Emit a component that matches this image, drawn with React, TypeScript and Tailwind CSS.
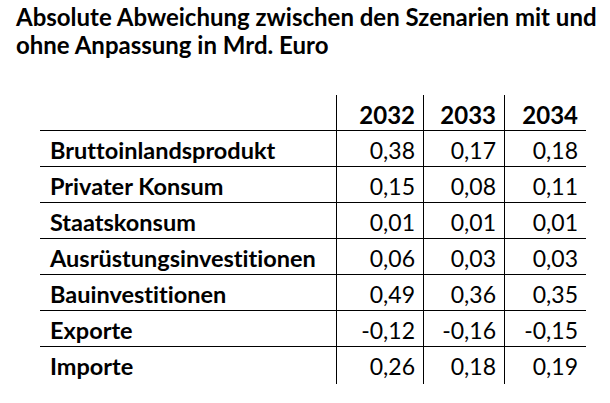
import React from "react";

const rows: [string, string, string, string][] = [
  ["Bruttoinlandsprodukt", "0,38", "0,17", "0,18"],
  ["Privater Konsum", "0,15", "0,08", "0,11"],
  ["Staatskonsum", "0,01", "0,01", "0,01"],
  ["Ausrüstungsinvestitionen", "0,06", "0,03", "0,03"],
  ["Bauinvestitionen", "0,49", "0,36", "0,35"],
  ["Exporte", "-0,12", "-0,16", "-0,15"],
  ["Importe", "0,26", "0,18", "0,19"],
];

export default function App() {
  return (
    <div
      className="w-[610px] h-[403px] bg-white text-black overflow-hidden [font-variant-ligatures:none]"
      style={{ fontFamily: "Lato, 'Open Sans', sans-serif" }}
    >
      <div className="pl-[16px] pt-[3px] text-[24px] font-bold leading-[28px]">
        <div>Absolute Abweichung zwischen den Szenarien mit und</div>
        <div>ohne Anpassung in Mrd. Euro</div>
      </div>
      <div className="ml-[40px] mt-[36px] w-[546px]">
        <div className="grid grid-cols-[297px_87px_81px_81px] h-[36px] border-b border-black font-bold text-[24px]">
          <div className="border-r border-black" />
          <div className="border-r border-black flex items-center justify-end pr-[8px] pt-[2px]">2032</div>
          <div className="border-r border-black flex items-center justify-end pr-[8px] pt-[2px]">2033</div>
          <div className="flex items-center justify-end pr-[8px] pt-[2px]">2034</div>
        </div>
        {rows.map((r, i) => (
          <div
            key={r[0]}
            className={
              i < rows.length - 1
                ? "grid grid-cols-[297px_87px_81px_81px] h-[36px] border-b border-black text-[23px]"
                : "grid grid-cols-[297px_87px_81px_81px] h-[36px] text-[23px]"
            }
          >
            <div className="border-r border-black flex items-center pl-[10px] pt-[2px] font-bold text-[23.5px]">{r[0]}</div>
            <div className="border-r border-black flex items-center justify-end pr-[8px] pt-[2px]">{r[1]}</div>
            <div className="border-r border-black flex items-center justify-end pr-[8px] pt-[2px]">{r[2]}</div>
            <div className="flex items-center justify-end pr-[8px] pt-[2px]">{r[3]}</div>
          </div>
        ))}
      </div>
    </div>
  );
}
